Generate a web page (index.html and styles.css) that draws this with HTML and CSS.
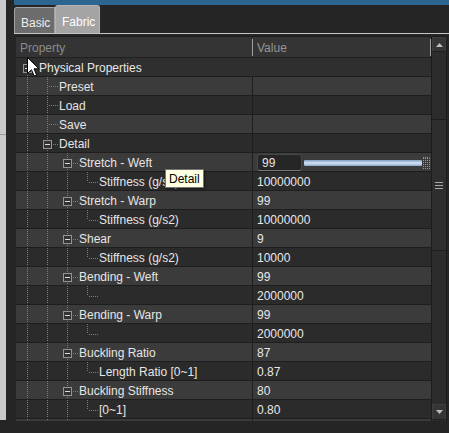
FILE: index.html
```html
<!DOCTYPE html>
<html lang="en">
<head>
    <meta charset="UTF-8">
    <title>Fabric Properties</title>
    <link rel="stylesheet" href="styles.css">
</head>
<body>
    <div class="app">
        <div class="side"></div>
        <div class="main">
            <div class="topbar"></div>
            <div class="tabs">
                <div class="tab">Basic</div>
                <div class="tab active">Fabric</div>
            </div>
            <div class="grid">
                <div class="table">
                    <div class="head">
                        <div class="hname">Property</div>
                        <div class="hval">Value</div>
                    </div>

                    <div class="row cat">
                        <div class="name"><span class="node exp root"><i class="box"></i></span><span class="label">Physical Properties</span></div>
                    </div>
                    <div class="row alt">
                        <div class="name"><span class="g"></span><span class="node tee"></span><span class="label">Preset</span></div>
                        <div class="val"></div>
                    </div>
                    <div class="row">
                        <div class="name"><span class="g"></span><span class="node tee"></span><span class="label">Load</span></div>
                        <div class="val"></div>
                    </div>
                    <div class="row alt">
                        <div class="name"><span class="g"></span><span class="node tee"></span><span class="label">Save</span></div>
                        <div class="val"></div>
                    </div>
                    <div class="row">
                        <div class="name"><span class="g"></span><span class="node exp"><i class="box"></i></span><span class="label">Detail</span></div>
                        <div class="val"></div>
                    </div>

                    <div class="row alt">
                        <div class="name"><span class="g"></span><span class="g"></span><span class="node exp"><i class="box"></i></span><span class="label">Stretch - Weft</span></div>
                        <div class="val">
                            <div class="edit">99</div>
                            <div class="slider"><div class="track"></div><div class="knob"></div></div>
                        </div>
                    </div>
                    <div class="row">
                        <div class="name"><span class="g"></span><span class="g"></span><span class="g"></span><span class="node ell"></span><span class="label">Stiffness (g/s2)</span></div>
                        <div class="val">10000000</div>
                    </div>
                    <div class="row alt">
                        <div class="name"><span class="g"></span><span class="g"></span><span class="node exp"><i class="box"></i></span><span class="label">Stretch - Warp</span></div>
                        <div class="val">99</div>
                    </div>
                    <div class="row">
                        <div class="name"><span class="g"></span><span class="g"></span><span class="g"></span><span class="node ell"></span><span class="label">Stiffness (g/s2)</span></div>
                        <div class="val">10000000</div>
                    </div>
                    <div class="row alt">
                        <div class="name"><span class="g"></span><span class="g"></span><span class="node exp"><i class="box"></i></span><span class="label">Shear</span></div>
                        <div class="val">9</div>
                    </div>
                    <div class="row">
                        <div class="name"><span class="g"></span><span class="g"></span><span class="g"></span><span class="node ell"></span><span class="label">Stiffness (g/s2)</span></div>
                        <div class="val">10000</div>
                    </div>
                    <div class="row alt">
                        <div class="name"><span class="g"></span><span class="g"></span><span class="node exp"><i class="box"></i></span><span class="label">Bending - Weft</span></div>
                        <div class="val">99</div>
                    </div>
                    <div class="row">
                        <div class="name"><span class="g"></span><span class="g"></span><span class="g"></span><span class="node ell"></span><span class="label"></span></div>
                        <div class="val">2000000</div>
                    </div>
                    <div class="row alt">
                        <div class="name"><span class="g"></span><span class="g"></span><span class="node exp"><i class="box"></i></span><span class="label">Bending - Warp</span></div>
                        <div class="val">99</div>
                    </div>
                    <div class="row">
                        <div class="name"><span class="g"></span><span class="g"></span><span class="g"></span><span class="node ell"></span><span class="label"></span></div>
                        <div class="val">2000000</div>
                    </div>
                    <div class="row alt">
                        <div class="name"><span class="g"></span><span class="g"></span><span class="node exp"><i class="box"></i></span><span class="label">Buckling Ratio</span></div>
                        <div class="val">87</div>
                    </div>
                    <div class="row">
                        <div class="name"><span class="g"></span><span class="g"></span><span class="g"></span><span class="node ell"></span><span class="label">Length Ratio [0~1]</span></div>
                        <div class="val">0.87</div>
                    </div>
                    <div class="row alt">
                        <div class="name"><span class="g"></span><span class="g"></span><span class="node exp"><i class="box"></i></span><span class="label">Buckling Stiffness</span></div>
                        <div class="val">80</div>
                    </div>
                    <div class="row">
                        <div class="name"><span class="g"></span><span class="g"></span><span class="g"></span><span class="node ell"></span><span class="label">[0~1]</span></div>
                        <div class="val">0.80</div>
                    </div>
                    <div class="row alt">
                        <div class="name"><span class="g"></span><span class="g"></span><span class="node exp"><i class="box"></i></span><span class="label"></span></div>
                        <div class="val"></div>
                    </div>
                </div>

                <div class="scroll">
                    <div class="sbtn">
                        <svg width="7" height="4" viewBox="0 0 7 4"><polygon points="3.5,0 7,4 0,4" fill="#bdbdbd"/></svg>
                    </div>
                    <div class="thumb">
                        <div class="grip"></div>
                    </div>
                    <div class="spacer"></div>
                    <div class="sbtn">
                        <svg width="7" height="4" viewBox="0 0 7 4"><polygon points="0,0 7,0 3.5,4" fill="#bdbdbd"/></svg>
                    </div>
                </div>
            </div>
        </div>
    </div>

    <div class="tooltip">Detail</div>

    <svg class="cursor" width="13" height="20" viewBox="0 0 13 20">
        <path d="M0.5,0.5 L0.5,16.5 L4.5,12.8 L7.2,19 L9.6,18 L7,11.8 L12,11.8 Z" fill="#fff" stroke="#000" stroke-width="1"/>
    </svg>
</body>
</html>
```

FILE: styles.css
```css
* {
    box-sizing: border-box;
}

body {
    margin: 0;
    background-color: #252525;
    font-family: 'Liberation Sans', Arial, sans-serif;
    font-size: 12px;
    color: #e4e4e4;
    position: relative;
    overflow: hidden;
}

.app {
    display: flex;
    height: 433px;
}

.side {
    width: 6px;
    height: 420px;
    margin-right: 8px;
    background-color: #c9c9c9;
    background-image: linear-gradient(#9a9a9a, #9a9a9a);
    background-size: 6px 1px;
    background-position: 0 134px;
    background-repeat: no-repeat;
}

.main {
    width: 435px;
    display: flex;
    flex-direction: column;
}

.topbar {
    height: 5px;
    background-color: #2b6590;
}

.tabs {
    height: 29px;
    display: flex;
    align-items: flex-end;
    border-bottom: 1px solid #c4c4c4;
}

.tab {
    height: 26px;
    width: 41px;
    padding: 8px 0 0 6px;
    background-color: #6c6c6c;
    border: 1px solid #a2a2a2;
    border-bottom: none;
    border-radius: 3px 0 0 0;
    color: #eeeeee;
    font-size: 12px;
}

.tab.active {
    height: 28px;
    width: 45px;
    padding-top: 9px;
    background-color: #a4a4a4;
    border-color: #b4b4b4;
    border-radius: 3px 3px 0 0;
    color: #ffffff;
}

.grid {
    margin: 2px 2px 0 2px;
    height: 385px;
    display: flex;
    border-top: 1px solid #1c1c1c;
}

.table {
    width: 415px;
    overflow: hidden;
}

.head {
    height: 21px;
    display: flex;
    align-items: center;
    background-color: #343434;
    border-bottom: 1px solid #202020;
}

.hname {
    width: 236px;
    padding: 1px 0 0 4px;
    color: #8a8a8a;
}

.hval {
    flex: 1;
    height: 17px;
    line-height: 16px;
    padding: 1px 0 0 4px;
    border-left: 1px solid #a0a0a0;
    border-right: 1px solid #a0a0a0;
    color: #969696;
}

.row {
    height: 19px;
    display: flex;
    background-color: #2b2b2b;
    border-bottom: 1px solid #1e1e1e;
}

.row.alt {
    background-color: #3b3b3b;
}

.row.cat {
    background-color: #2f2f2f;
}

.name {
    width: 236px;
    height: 18px;
    display: flex;
    align-items: center;
    flex: none;
}

.label {
    white-space: nowrap;
    padding-top: 2px;
    color: #e6e6e6;
}

.val {
    flex: 1;
    height: 18px;
    display: flex;
    align-items: center;
    padding: 2px 0 0 4px;
    border-left: 1px solid #1e1e1e;
    color: #e8e8e8;
}

/* tree guide lines */
.g {
    width: 20px;
    height: 18px;
    flex: none;
    background: repeating-linear-gradient(to bottom, #7c7c7c 0 1px, transparent 1px 2px) 11px 0 / 1px 100% no-repeat;
}

.node {
    width: 23px;
    height: 18px;
    flex: none;
    display: flex;
    align-items: center;
}

.node.tee {
    background:
        repeating-linear-gradient(to bottom, #7c7c7c 0 1px, transparent 1px 2px) 11px 0 / 1px 100% no-repeat,
        repeating-linear-gradient(to right, #7c7c7c 0 1px, transparent 1px 2px) 13px 9px / 9px 1px no-repeat;
}

.node.ell {
    background:
        repeating-linear-gradient(to bottom, #7c7c7c 0 1px, transparent 1px 2px) 11px 0 / 1px 10px no-repeat,
        repeating-linear-gradient(to right, #7c7c7c 0 1px, transparent 1px 2px) 13px 10px / 9px 1px no-repeat;
}

.node.exp {
    background:
        repeating-linear-gradient(to bottom, #7c7c7c 0 1px, transparent 1px 2px) 11px 0 / 1px 100% no-repeat,
        repeating-linear-gradient(to right, #7c7c7c 0 1px, transparent 1px 2px) 17px 10px / 5px 1px no-repeat;
}

.node.root {
    background:
        repeating-linear-gradient(to bottom, #7c7c7c 0 1px, transparent 1px 2px) 11px 15px / 1px 3px no-repeat,
        repeating-linear-gradient(to right, #7c7c7c 0 1px, transparent 1px 2px) 17px 10px / 5px 1px no-repeat;
}

.box {
    width: 9px;
    height: 9px;
    margin-left: 7px;
    margin-top: 2px;
    border: 1px solid #959595;
    background: linear-gradient(#dcdcdc, #dcdcdc) center / 5px 1px no-repeat;
    background-color: #333333;
}

/* inline editor in the value cell */
.edit {
    width: 45px;
    height: 17px;
    margin-top: -1px;
    padding: 1px 0 0 4px;
    border: 1px solid #474747;
    border-bottom-color: #777777;
    border-radius: 3px;
    background-color: #262626;
    color: #e4e4e4;
    font-size: 12px;
}

.slider {
    flex: 1;
    height: 16px;
    display: flex;
    align-items: center;
    padding-left: 2px;
}

.track {
    flex: 1;
    height: 6px;
    background: linear-gradient(#7d9cbf, #d4e4f4 50%, #8aa8c8);
    border-radius: 1px;
}

.knob {
    width: 8px;
    height: 13px;
    margin-right: 1px;
    border-radius: 2px;
    background-color: #3a3a3a;
    background-image:
        repeating-linear-gradient(to right, transparent 0 1px, #3a3a3a 1px 2px),
        repeating-linear-gradient(to bottom, #9a9a9a 0 1px, #3a3a3a 1px 2px);
    background-position: 1px 1px;
}

/* scrollbar */
.scroll {
    width: 16px;
    display: flex;
    flex-direction: column;
    background-color: #2c2c2c;
    border-left: 1px solid #1c1c1c;
    border-right: 1px solid #1c1c1c;
}

.sbtn {
    height: 15px;
    flex: none;
    display: flex;
    align-items: center;
    justify-content: center;
    background-color: #353535;
    border: 1px solid #3e3e3e;
    border-bottom-color: #1e1e1e;
}

.sbtn:last-child {
    height: 16px;
    margin-bottom: 1px;
    border-top-color: #3e3e3e;
}

.thumb {
    height: 132px;
    margin-top: 67px;
    flex: none;
    display: flex;
    align-items: center;
    justify-content: center;
    background-color: #2e2e2e;
    border-top: 1px solid #1e1e1e;
    border-bottom: 1px solid #1e1e1e;
}

.grip {
    width: 8px;
    height: 7px;
    background: repeating-linear-gradient(to bottom, #a8a8a8 0 1px, transparent 1px 3px);
}

.spacer {
    flex: 1;
}

/* overlays */
.tooltip {
    position: absolute;
    left: 165px;
    top: 169px;
    height: 19px;
    padding: 2px 3px 0 3px;
    background-color: #ffffe1;
    border: 1px solid #767676;
    box-shadow: 1px 1px 2px rgba(0, 0, 0, 0.5);
    color: #000;
    font-size: 12px;
}

.cursor {
    position: absolute;
    left: 27px;
    top: 57px;
}
```
